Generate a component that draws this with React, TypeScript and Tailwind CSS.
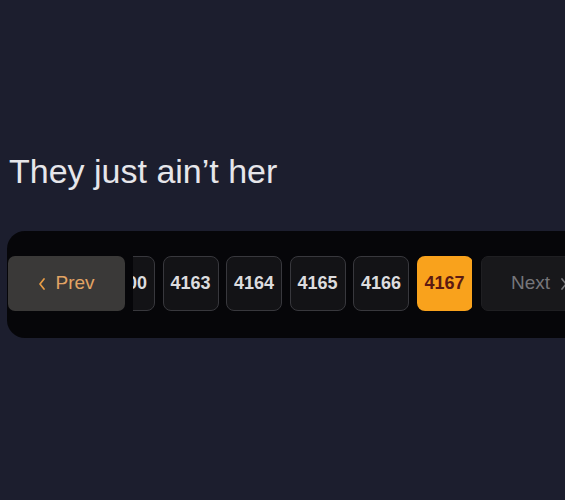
import React from "react";

const pages = ["4163", "4164", "4165", "4166"];

function Chevron({ dir, className }: { dir: "left" | "right"; className?: string }) {
  return (
    <svg width="8" height="12" viewBox="0 0 8 12" className={className} fill="none">
      <polyline
        points={dir === "left" ? "6,1 2,6 6,11" : "2,1 6,6 2,11"}
        stroke="currentColor"
        strokeWidth="1.7"
        strokeLinecap="round"
        strokeLinejoin="round"
      />
    </svg>
  );
}

function PageButton({ label, active, className }: { label: string; active?: boolean; className?: string }) {
  return (
    <div
      className={
        "flex h-[55px] w-[56px] shrink-0 items-center justify-center rounded-[8px] text-[18px] font-bold " +
        (active
          ? "bg-[#f9a21c] text-[#5c1a12]"
          : "border-[1.5px] border-[#38383d] bg-[#131316] text-[#dcdcde]") +
        (className ? " " + className : "")
      }
    >
      {label}
    </div>
  );
}

export default function App() {
  return (
    <div
      className="h-[500px] w-[565px] overflow-hidden bg-[#1c1e2e]"
      style={{ fontFamily: '"Liberation Sans", Arial, sans-serif' }}
    >
      <div className="pt-[154px] pl-[9px] text-[34px] leading-[34px] text-[#e6e6ea]">They just ain’t her</div>

      <div className="mt-[43px] ml-[7px] flex h-[107px] items-center rounded-l-[18px] bg-[#060609] pb-[2px] pl-[1px]">
        <div className="flex h-[55px] w-[117px] shrink-0 items-center justify-center gap-[9px] rounded-[7px] bg-[#3a3938] text-[19px] text-[#e2a464]">
          <Chevron dir="left" className="text-[#e99d45]" />
          <span>Prev</span>
        </div>

        <div className="ml-[8px] flex w-[339px] shrink-0 gap-[7.5px] overflow-hidden">
          <PageButton label="4100" className="-ml-[34px]" />
          {pages.map((p) => (
            <PageButton key={p} label={p} />
          ))}
          <PageButton label="4167" active />
        </div>

        <div className="ml-[9px] flex h-[55px] w-[117px] shrink-0 items-center justify-center gap-[10px] rounded-[7px] border border-[#1f1f22] bg-[#18181b] text-[19px] text-[#76767a]">
          <span>Next</span>
          <Chevron dir="right" />
        </div>
      </div>
    </div>
  );
}
